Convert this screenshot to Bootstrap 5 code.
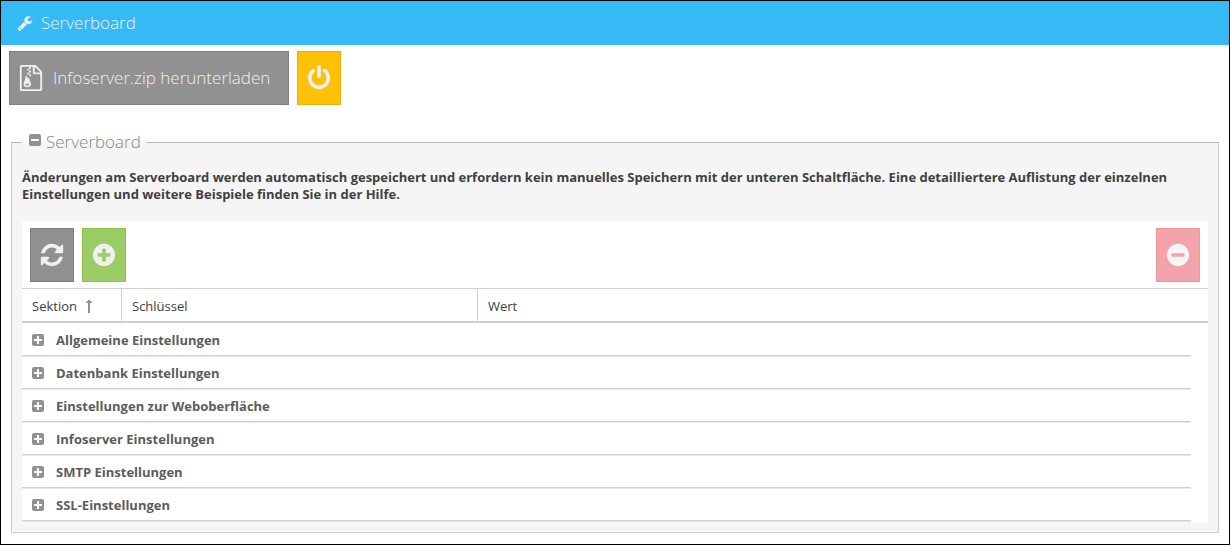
<!DOCTYPE html>
<html lang="de">
<head>
<meta charset="utf-8">
<meta name="viewport" content="width=device-width, initial-scale=1">
<title>Serverboard</title>
<link href="https://cdn.jsdelivr.net/npm/bootstrap@5.3.0/dist/css/bootstrap.min.css" rel="stylesheet">
<style>
body { font-family: "Open Sans", sans-serif; font-size: 13px; line-height: 17px; color: #404040; }
.app-frame { border: 1px solid #000; }
.title-bar { background: #35baf6; color: #f0f0f0; height: 44px; padding: 0 16px; }
.title-bar h1 { font-size: 17px; line-height: 24px; font-weight: 300; }
svg { fill: currentColor; display: block; flex: none; }
.tool { --bs-btn-color: #f0f0f0; --bs-btn-hover-color: #fff; --bs-btn-active-color: #fff; --bs-btn-disabled-color: #f5f5f5; --bs-btn-disabled-opacity: 1;
  height: 54px; min-width: 44px; padding: 0 8px; border-radius: 0; font-size: 17px; font-weight: 300; }
.tool-grey { --bs-btn-bg: #919191; --bs-btn-border-color: #808080; --bs-btn-hover-bg: #858585; }
.tool-amber { --bs-btn-bg: #ffc107; --bs-btn-border-color: #edb100; --bs-btn-hover-bg: #edb100; }
.tool-green { --bs-btn-bg: #9ccc65; --bs-btn-border-color: #8bc34a; --bs-btn-hover-bg: #8bc34a; }
.tool-red { --bs-btn-disabled-bg: #f2a3ab; --bs-btn-disabled-border-color: #f095a0; }
.download { width: 280px; padding: 0 9px; gap: 10px; }
.board { margin: 20px 10px 11px; border: 1px solid #cfcfcf; border-top-color: #b5b5b5; background: #f5f5f5; padding: 0 10px 10px; }
.board legend { padding: 0 5px 0 7px; font-size: 17px; line-height: 22px; font-weight: 300; color: #858585; }
.board-title { gap: 5px; }
.toggle { border: 0; background: none; padding: 0; color: #919191; }
.board-title .toggle { padding-bottom: 4px; }
.note { margin: 16px 0 19px; font-weight: 700; }
.tool-row { padding: 6px 8px; }
.settings { table-layout: fixed; border-collapse: separate; border-spacing: 0; }
.settings th { height: 35px; padding: 2px 10px 0; border-top: 1px solid #cfcfcf; border-bottom: 2px solid #cfcfcf; font-weight: 400; }
.settings .ruled { border-right: 1px solid #cfcfcf; }
.settings tbody td { height: 33px; padding: 0; }
.settings tbody .group { padding: 0 10px; border-top: 1px solid #e8e8e8; border-bottom: 1px solid #cfcfcf; }
.settings tr:first-child .group { border-top-color: #fff; }
.settings tfoot td { height: 1px; padding: 0; }
.settings tfoot .edge { background: #e8e8e8; }
.group button { gap: 12px; padding-top: 2px; color: #5c5c5c; font-weight: 700; }
.group svg { margin-bottom: 2px; color: #919191; }
.col-section { width: 100px; }
.col-key { width: 356px; }
.col-gutter { width: 17px; }
</style>
</head>
<body>
<svg class="d-none" aria-hidden="true">
  <symbol id="plus-square" viewBox="0 0 12 12"><path fill-rule="evenodd" d="M2 0h8a2 2 0 0 1 2 2v8a2 2 0 0 1-2 2H2a2 2 0 0 1-2-2V2a2 2 0 0 1 2-2zM5 2v3H2v2h3v3h2V7h3V5H7V2z"/></symbol>
  <symbol id="minus-square" viewBox="0 0 12 12"><path fill-rule="evenodd" d="M2 0h8a2 2 0 0 1 2 2v8a2 2 0 0 1-2 2H2a2 2 0 0 1-2-2V2a2 2 0 0 1 2-2zM2 5v2h8V5z"/></symbol>
</svg>
<div class="app-frame">
  <header class="title-bar d-flex align-items-center gap-2">
    <svg width="16" height="16" viewBox="0 0 1792 1792" aria-hidden="true"><path d="M448 1472q0-26-19-45t-45-19-45 19-19 45 19 45 45 19 45-19 19-45zm644-420l-682 682q-37 37-90 37-52 0-91-37l-106-108q-38-36-38-90 0-53 38-91l681-681q39 98 114.500 173.500t173.500 114.500zm634-435q0 39-23 106-47 134-164.500 217.500t-258.500 83.500q-185 0-316.500-131.500t-131.500-316.500 131.500-316.500 316.500-131.500q58 0 121.500 16.500t107.500 46.500q16 11 16 28t-16 28l-293 169v224l193 107q5-3 79-48.500t135.500-81 70.500-35.500q15 0 23.500 10t8.500 25z"/></svg>
    <h1 class="m-0">Serverboard</h1>
  </header>
  <main>
    <div class="d-flex flex-wrap gap-2 tool-row">
      <button type="button" class="btn tool tool-grey download d-flex align-items-center">
        <svg width="24" height="26" viewBox="70 0 1654 1792" aria-hidden="true"><path fill-rule="evenodd" d="M1596 380q28 28 48 76t20 88v1152q0 40-28 68t-68 28h-1344q-40 0-68-28t-28-68v-1600q0-40 28-68t68-28h896q40 0 88 20t76 48zM1152 136v376h376q-10-29-22-41l-313-313q-12-12-41-22zM1536 1664v-1024h-416q-40 0-68-28t-28-68v-416h-128v128h-128v-128h-512v1536z"/><path d="M640 256h128v128h-128zM768 384h128v128h-128zM640 512h128v128h-128zM768 640h128v128h-128z"/><path fill-rule="evenodd" d="M781 943l107 349q8 27 8 52 0 83-72.500 137.500t-183.500 54.500-183.500-54.500-72.500-137.500q0-25 8-52 21-63 120-396v-128h128v128h79q22 0 39 13t23 34zm-141 465q53 0 90.500-19t37.500-45-37.500-45-90.500-19-90.500 19-37.500 45 37.500 45 90.500 19z"/></svg>
        <span>Infoserver.zip herunterladen</span>
      </button>
      <button type="button" class="btn tool tool-amber" aria-label="Server neu starten">
        <svg width="26" height="26" viewBox="0 0 1792 1792"><path d="M1664 896q0 156-61 298t-164 245-245 164-298 61-298-61-245-164-164-245-61-298q0-182 80.500-343t226.500-270q43-32 95.500-25t83.500 50q32 42 24.500 94.500t-49.500 84.500q-98 74-151.500 181t-53.500 228q0 104 40.500 198.500t109.500 163.500 163.500 109.500 198.500 40.500 198.500-40.500 163.500-109.500 109.500-163.500 40.500-198.500q0-121-53.500-228t-151.500-181q-42-32-49.500-84.500t24.500-94.500q31-43 84-50t95 25q146 109 226.500 270t80.500 343zm-640-768v640q0 52-38 90t-90 38-90-38-38-90v-640q0-52 38-90t90-38 90 38 38 90z"/></svg>
      </button>
    </div>
    <fieldset class="board">
      <legend class="float-none w-auto m-0">
        <span class="d-flex align-items-center board-title">
          <button type="button" class="toggle" aria-label="Bereich einklappen"><svg width="12" height="12"><use href="#minus-square"/></svg></button>
          <span>Serverboard</span>
        </span>
      </legend>
      <p class="note">Änderungen am Serverboard werden automatisch gespeichert und erfordern kein manuelles Speichern mit der unteren Schaltfläche. Eine detailliertere Auflistung der einzelnen Einstellungen und weitere Beispiele finden Sie in der Hilfe.</p>
      <div class="bg-white">
        <div class="d-flex gap-2 tool-row">
          <button type="button" class="btn tool tool-grey" aria-label="Aktualisieren">
            <svg width="26" height="26" viewBox="0 0 1792 1792"><path d="M1639 1056q0 5-1 7-64 268-268 434.500t-478 166.500q-146 0-282.500-55t-243.500-157l-129 129q-19 19-45 19t-45-19-19-45v-448q0-26 19-45t45-19h448q26 0 45 19t19 45-19 45l-137 137q71 66 161 102t187 36q134 0 250-65t186-179q11-17 53-117 8-23 30-23h192q13 0 22.500 9.500t9.500 22.500zm25-800v448q0 26-19 45t-45 19h-448q-26 0-45-19t-19-45 19-45l138-138q-148-137-349-137-134 0-250 65t-186 179q-11 17-53 117-8 23-30 23h-199q-13 0-22.500-9.500t-9.500-22.500v-7q65-268 270-434.500t480-166.500q146 0 284 55.500t245 156.500l130-129q19-19 45-19t45 19 19 45z"/></svg>
          </button>
          <button type="button" class="btn tool tool-green" aria-label="Hinzufügen">
            <svg width="26" height="26" viewBox="0 0 1792 1792"><path fill-rule="evenodd" d="M1344 960v-128q0-26-19-45t-45-19h-256v-256q0-26-19-45t-45-19h-128q-26 0-45 19t-19 45v256h-256q-26 0-45 19t-19 45v128q0 26 19 45t45 19h256v256q0 26 19 45t45 19h128q26 0 45-19t19-45v-256h256q26 0 45-19t19-45zm320-64q0 209-103 385.500t-279.500 279.500-385.500 103-385.500-103-279.500-279.500-103-385.500 103-385.500 279.500-279.500 385.500-103 385.500 103 279.500 279.500 103 385.500z"/></svg>
          </button>
          <button type="button" class="btn tool tool-red ms-auto" aria-label="Entfernen" disabled>
            <svg width="26" height="26" viewBox="0 0 1792 1792"><path fill-rule="evenodd" d="M1344 960v-128q0-26-19-45t-45-19h-768q-26 0-45 19t-19 45v128q0 26 19 45t45 19h768q26 0 45-19t19-45zm320-64q0 209-103 385.500t-279.500 279.500-385.500 103-385.500-103-279.500-279.500-103-385.500 103-385.500 279.500-279.500 385.500-103 385.500 103 279.500 279.500 103 385.500z"/></svg>
          </button>
        </div>
        <table class="settings w-100">
          <colgroup><col class="col-section"><col class="col-key"><col><col class="col-gutter"></colgroup>
          <thead>
            <tr>
              <th scope="col" class="ruled" aria-sort="ascending"><span class="d-flex align-items-center gap-2">Sektion <svg width="8" height="15" viewBox="0 0 8 15" aria-hidden="true"><path d="M3 14V4H1V3h1V2h1V1h2v1h1v1h1v1H5v10z" fill="#919191"/></svg></span></th>
              <th scope="col" class="ruled">Schlüssel</th>
              <th scope="col" colspan="2">Wert</th>
            </tr>
          </thead>
          <tbody>
            <tr><td colspan="3" class="group"><button type="button" class="toggle d-flex align-items-center"><svg width="12" height="12"><use href="#plus-square"/></svg>Allgemeine Einstellungen</button></td><td></td></tr>
            <tr><td colspan="3" class="group"><button type="button" class="toggle d-flex align-items-center"><svg width="12" height="12"><use href="#plus-square"/></svg>Datenbank Einstellungen</button></td><td></td></tr>
            <tr><td colspan="3" class="group"><button type="button" class="toggle d-flex align-items-center"><svg width="12" height="12"><use href="#plus-square"/></svg>Einstellungen zur Weboberfläche</button></td><td></td></tr>
            <tr><td colspan="3" class="group"><button type="button" class="toggle d-flex align-items-center"><svg width="12" height="12"><use href="#plus-square"/></svg>Infoserver Einstellungen</button></td><td></td></tr>
            <tr><td colspan="3" class="group"><button type="button" class="toggle d-flex align-items-center"><svg width="12" height="12"><use href="#plus-square"/></svg>SMTP Einstellungen</button></td><td></td></tr>
            <tr><td colspan="3" class="group"><button type="button" class="toggle d-flex align-items-center"><svg width="12" height="12"><use href="#plus-square"/></svg>SSL-Einstellungen</button></td><td></td></tr>
          </tbody>
          <tfoot><tr><td colspan="3" class="edge"></td><td></td></tr></tfoot>
        </table>
      </div>
    </fieldset>
  </main>
</div>
<script src="https://cdn.jsdelivr.net/npm/bootstrap@5.3.0/dist/js/bootstrap.bundle.min.js"></script>
</body>
</html>
